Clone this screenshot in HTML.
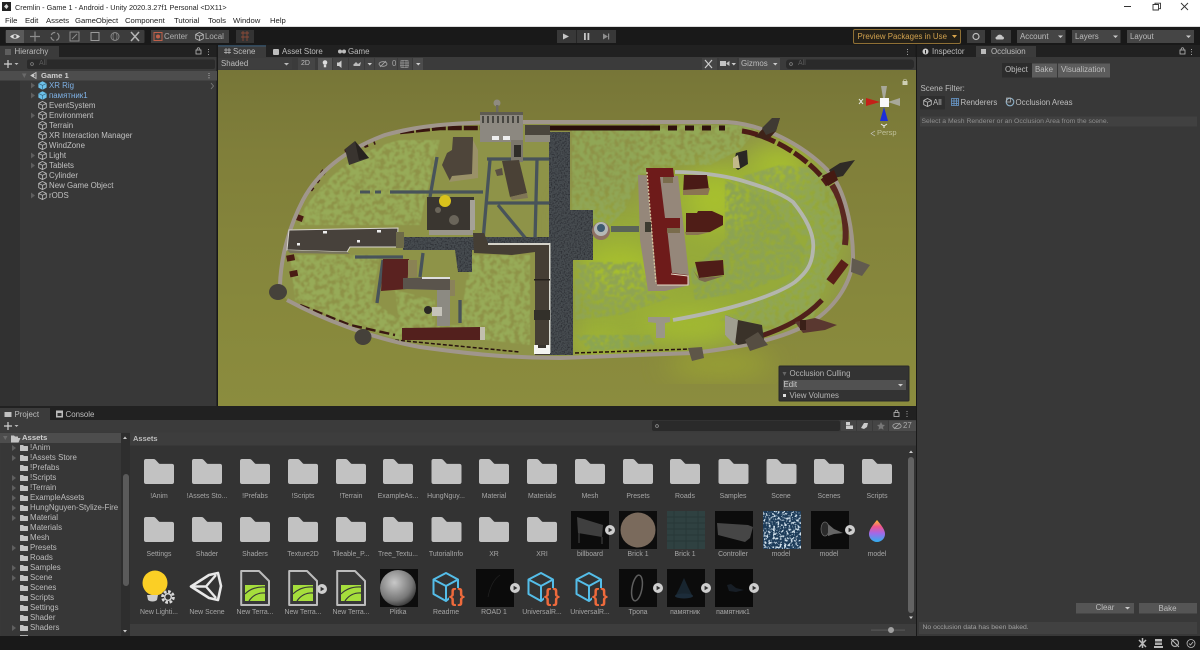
<!DOCTYPE html>
<html lang="en"><head><meta charset="utf-8"><title>Cremlin - Unity</title>
<style>
html,body{margin:0;padding:0;width:1200px;height:650px;overflow:hidden;background:#383838}
body{position:relative;font-family:"Liberation Sans","Noto Sans CJK SC",sans-serif}
svg.g{position:absolute;left:0;top:0}
span{position:absolute;white-space:nowrap;line-height:10px;font-size:7.9px;color:#bdbdbd}
.c{transform:translateX(-50%)}
.w{color:#222;font-size:7.7px}
.l{font-size:6.9px;color:#a6a6a6}
.h{color:#c0c0c0}
.b{color:#7fb2e6}
</style></head><body>
<svg class="g" width="1200" height="650" viewBox="0 0 1200 650" xmlns="http://www.w3.org/2000/svg">
<defs>
<filter id="tree" x="-5%" y="-5%" width="110%" height="110%" color-interpolation-filters="sRGB"><feTurbulence type="fractalNoise" baseFrequency=".2" numOctaves="2" seed="4" result="n"/><feColorMatrix in="n" type="matrix" values="0 0 0 0 0 0 0 0 0 0 0 0 0 0 0 4 0 0 0 -1.3" result="a"/><feComposite in="SourceGraphic" in2="a" operator="in"/><feGaussianBlur stdDeviation=".6"/></filter>
<filter id="cob" x="0" y="0" width="100%" height="100%" color-interpolation-filters="sRGB"><feTurbulence type="fractalNoise" baseFrequency=".7" numOctaves="1" seed="9" result="n"/><feColorMatrix in="n" type="matrix" values="0 0 0 0 .17 0 0 0 0 .18 0 0 0 0 .2 3 0 0 0 -1.3" result="a"/><feComposite in="a" in2="SourceGraphic" operator="in" result="b"/><feMerge><feMergeNode in="SourceGraphic"/><feMergeNode in="b"/></feMerge></filter>
<filter id="bl" x="-60%" y="-60%" width="220%" height="220%" color-interpolation-filters="sRGB"><feGaussianBlur stdDeviation="14"/></filter>
<filter id="bs" color-interpolation-filters="sRGB"><feGaussianBlur stdDeviation=".35"/></filter>
<filter id="gr" x="0" y="0" width="100%" height="100%" color-interpolation-filters="sRGB"><feTurbulence type="fractalNoise" baseFrequency=".45" numOctaves="2" seed="3" result="n"/><feColorMatrix in="n" type="matrix" values="0 0 0 0 .82 0 0 0 0 .88 0 0 0 0 .92 6 0 0 0 -3" result="a"/><feComposite in="a" in2="SourceGraphic" operator="in" result="b"/><feMerge><feMergeNode in="SourceGraphic"/><feMergeNode in="b"/></feMerge></filter>
<radialGradient id="sph" cx=".4" cy=".35" r=".7"><stop offset="0" stop-color="#c8c8c8"/><stop offset=".7" stop-color="#777"/><stop offset="1" stop-color="#333"/></radialGradient>
<linearGradient id="drop" x1="0" y1="0" x2="0" y2="1"><stop offset="0" stop-color="#ffc02e"/><stop offset=".3" stop-color="#f0568c"/><stop offset=".6" stop-color="#a368e8"/><stop offset="1" stop-color="#2eb0ee"/></linearGradient>
<linearGradient id="sky" x1="0" y1="0" x2="0" y2="1"><stop offset="0" stop-color="#777638"/><stop offset=".25" stop-color="#807f3a"/><stop offset=".7" stop-color="#87883c"/><stop offset="1" stop-color="#8b8c3e"/></linearGradient>
<symbol id="folder" viewBox="0 0 30 25" overflow="visible"><path d="M2,0h7.5c1,0 1.6,.4 2.2,1l3,3.2c.5,.5 1,.7 1.8,.7H28c1.2,0 2,.8 2,2V23c0,1.2-.8,2-2,2H2c-1.2,0-2-.8-2-2V2C0,.8 .8,0 2,0Z" fill="#c2c2c2"/></symbol>
<symbol id="mf" viewBox="0 0 8 6" overflow="visible"><path d="M0,.6C0,.2 .2,0 .6,0H3L4,1H7.4C7.8,1 8,1.2 8,1.6V5.4C8,5.8 7.8,6 7.4,6H.6C.2,6 0,5.8 0,5.4Z" fill="#c4c4c4"/></symbol>
<symbol id="cube" viewBox="0 0 9 9" overflow="visible"><path d="M4.5,.5L8.3,2.4V6.6L4.5,8.5 .7,6.6V2.4ZM.7,2.4L4.5,4.3 8.3,2.4M4.5,4.3V8.5" fill="none" stroke="#bdbdbd" stroke-width=".8"/></symbol>
<symbol id="bcube" viewBox="0 0 9 9" overflow="visible"><path d="M4.5,.3L8.6,2.4V6.6L4.5,8.7 .4,6.6V2.4Z" fill="#6cc0e8"/><path d="M.4,2.4L4.5,4.4 8.6,2.4M4.5,4.4V8.7" fill="none" stroke="#2f5a74" stroke-width=".6"/></symbol>
<symbol id="tri" viewBox="0 0 4 6" overflow="visible"><path d="M0,0L4,3 0,6Z" fill="#5f5f5f"/></symbol>
<symbol id="play" viewBox="0 0 10 10" overflow="visible"><circle cx="5" cy="5" r="5" fill="#cfcfcf"/><path d="M3.6,2.7L7.4,5 3.6,7.3Z" fill="#333"/></symbol>
<symbol id="terr" viewBox="0 0 30 36" overflow="visible"><path d="M1.2,1H19L29,11V35H1.2Z" fill="#383838" stroke="#bcbcbc" stroke-width="2" stroke-linejoin="round"/><path d="M5,15H25V31H5Z" fill="#a6de3c"/><path d="M5,24C10,19 17,16.500 25,17M9,31C13,25 19,22.500 25,23" fill="none" stroke="#383838" stroke-width="1.200"/></symbol>
<symbol id="rm" viewBox="0 0 36 36" overflow="visible"><path d="M15,2L27,8.5V20L15,30 2.5,23V8.5ZM2.5,8.5L15,15 27,8.5M15,15V30" fill="none" stroke="#54bde8" stroke-width="2" stroke-linejoin="round"/><rect x="18" y="17" width="18" height="19" fill="#333"/></symbol>
</defs>

<!-- chrome -->
<rect width="1200" height="650" fill="#383838"/>
<rect width="1200" height="27" fill="#fff"/>
<rect y="26.5" width="1200" height=".8" fill="#b8b8b8"/>
<rect y="27" width="1200" height="18" fill="#191919"/>
<rect y="45" width="1200" height="12" fill="#212121"/>
<rect y="57" width="217" height="14" fill="#3b3b3b"/>
<rect y="636" width="1200" height="14" fill="#191919"/>
<rect x="0" y="71" width="20" height="335" fill="#313131"/>
<rect x="216.5" y="45" width="1.5" height="362" fill="#191919"/>
<rect x="915.5" y="45" width="1.5" height="591" fill="#191919"/>
<!-- title icon -->
<rect x="2" y="2" width="9" height="9" fill="#222"/><path d="M4,6.5L6.5,4 8.5,6.5 6.5,9Z" fill="#ddd"/>
<!-- window buttons -->
<path d="M1124,6.5h7" stroke="#333" stroke-width="1"/>
<path d="M1153,4.5h5.5v5.5h-5.5ZM1155,4.5v-1.3h5.5v5.5h-2" fill="none" stroke="#333" stroke-width=".9"/>
<path d="M1181,3l7,7M1188,3l-7,7" stroke="#333" stroke-width=".9"/>
<!-- toolbar tool group -->
<rect x="5.500" y="30" width="139" height="13" fill="#3c3c3c" rx="1"/>
<rect x="6" y="30" width="18" height="13" fill="#5a5a5a"/>
<path d="M10,36.500Q15,32 20,36.500Q15,41 10,36.500Z" fill="#ddd"/><circle cx="15" cy="36.500" r="1.500" fill="#5a5a5a"/>
<path d="M35,31.500V41.500M30,36.500H40" stroke="#8d8d8d" stroke-width="1.200"/>
<circle cx="55" cy="36.500" r="4" fill="none" stroke="#8d8d8d" stroke-width="1.200" stroke-dasharray="5 2"/>
<rect x="70" y="32" width="9" height="9" fill="none" stroke="#8d8d8d"/><path d="M72,39L77,34" stroke="#8d8d8d"/>
<rect x="91" y="32.500" width="8" height="8" fill="none" stroke="#9a9a9a"/>
<circle cx="115" cy="36.500" r="4" fill="none" stroke="#858585"/><ellipse cx="115" cy="36.500" rx="2" ry="4" fill="none" stroke="#858585" stroke-width=".7"/>
<path d="M131,32l8,9M139,32l-8,9" stroke="#b5b5b5" stroke-width="1.500"/>
<rect x="151" y="30" width="78" height="13" fill="#3f3f3f"/>
<rect x="154" y="32.500" width="8" height="8" fill="none" stroke="#c0604a"/><circle cx="158" cy="36.500" r="2" fill="#c0604a"/>
<use href="#cube" x="195" y="32" width="9" height="9"/>
<rect x="236" y="30" width="18" height="13" fill="#333"/><path d="M241,33h8M241,37h8M243,31v10M247,31v10" stroke="#8a4a38" stroke-width=".9"/>
<!-- play -->
<rect x="557" y="30" width="59" height="13" fill="#383838"/><rect x="576" y="30" width="1" height="13" fill="#262626"/>
<path d="M563,33.500L569,36.500 563,39.500Z" fill="#c6c6c6"/>
<rect x="584" y="33" width="1.800" height="7" fill="#c6c6c6"/><rect x="587.500" y="33" width="1.800" height="7" fill="#c6c6c6"/>
<path d="M603,33.500L608,36.500 603,39.500Z" fill="#8e8e8e"/><rect x="608" y="33.500" width="1.200" height="6" fill="#8e8e8e"/>
<!-- right toolbar -->
<rect x="853.500" y="29.500" width="107" height="14" rx="1.500" fill="#242018" stroke="#8f7035"/>
<path d="M952,35h5l-2.500,3Z" fill="#d9a54c"/>
<rect x="967" y="30" width="18" height="13" fill="#3c3c3c"/><circle cx="976" cy="36.500" r="3" fill="none" stroke="#bdbdbd" stroke-width="1.200"/>
<rect x="991" y="30" width="20" height="13" fill="#3c3c3c"/><path d="M997,39.500c-2,0-2-3 0-3 .5-2.500 5-2.500 5.500 0 2,0 2,3 0,3Z" fill="#c6c6c6"/>
<rect x="1017" y="30" width="48.500" height="13" fill="#454545"/><path d="M1058,35.500h5l-2.500,2.500Z" fill="#ccc"/>
<rect x="1072" y="30" width="48.500" height="13" fill="#454545"/><path d="M1113,35.500h5l-2.500,2.500Z" fill="#ccc"/>
<rect x="1127" y="30" width="67" height="13" fill="#454545"/><path d="M1186,35.500h5l-2.500,2.500Z" fill="#ccc"/>

<!-- Hierarchy tab -->
<rect x="0" y="46" width="59" height="11" fill="#3b3b3b"/>
<path d="M5,50h6M5,52h6M5,54h6" stroke="#9a9a9a" stroke-width=".7"/>
<rect x="196" y="50" width="5" height="4" fill="none" stroke="#bbb" stroke-width=".8"/><path d="M197,50c0-3 3-3 3,0" fill="none" stroke="#bbb" stroke-width=".7"/>
<path d="M208.500,49v.8M208.500,51.500v.8M208.500,54v.8" stroke="#ccc" stroke-width="1"/>
<path d="M4,64h8M8,60v8" stroke="#d0d0d0" stroke-width="1.200"/><path d="M14.500,63h4l-2,2Z" fill="#bbb"/>
<rect x="27" y="59.500" width="188" height="9.500" rx="2" fill="#2a2a2a"/>
<circle cx="32" cy="64" r="1.400" fill="none" stroke="#888" stroke-width=".7"/>
<!-- Hierarchy content -->
<rect x="20" y="71" width="197" height="9.500" fill="#4d4d4d"/><rect y="71" width="20" height="9.500" fill="#4d4d4d"/>
<path d="M22,73.500l4.500,0-2.200,4.500Z" fill="#6a6a6a"/>
<path d="M31,75.500L36,72.500V78.500Z" fill="none" stroke="#c8c8c8" stroke-width=".9"/><circle cx="33" cy="75.500" r="1.500" fill="#c8c8c8"/>
<path d="M209,73v.8M209,75.200v.8M209,77.400v.8" stroke="#ccc" stroke-width="1"/>
<use href="#bcube" x="38" y="81" width="9" height="9"/>
<use href="#bcube" x="38" y="91" width="9" height="9"/>
<use href="#tri" x="31" y="82.500" width="4" height="6"/>
<use href="#tri" x="31" y="92.500" width="4" height="6"/>
<use href="#tri" x="31" y="112.500" width="4" height="6"/>
<use href="#tri" x="31" y="152.500" width="4" height="6"/>
<use href="#tri" x="31" y="162.500" width="4" height="6"/>
<use href="#tri" x="31" y="192.500" width="4" height="6"/>
<path d="M211,83l2.500,3-2.500,3" fill="none" stroke="#777" stroke-width=".9"/>
<use href="#cube" x="38" y="101" width="9" height="9"/>
<use href="#cube" x="38" y="111" width="9" height="9"/>
<use href="#cube" x="38" y="121" width="9" height="9"/>
<use href="#cube" x="38" y="131" width="9" height="9"/>
<use href="#cube" x="38" y="141" width="9" height="9"/>
<use href="#cube" x="38" y="151" width="9" height="9"/>
<use href="#cube" x="38" y="161" width="9" height="9"/>
<use href="#cube" x="38" y="171" width="9" height="9"/>
<use href="#cube" x="38" y="181" width="9" height="9"/>
<use href="#cube" x="38" y="191" width="9" height="9"/>

<!-- Scene tabs -->
<rect x="218" y="45.500" width="48" height="11.500" fill="#3b3b3b"/><rect x="218" y="45.500" width="48" height=".8" fill="#3f6f95"/>
<path d="M226,48v6M229,48v6M224,50h7M224,52.500h7" stroke="#bbb" stroke-width=".7"/>
<rect x="273" y="49" width="6" height="6" rx="1" fill="#bdbdbd"/>
<rect x="338" y="49.500" width="4" height="4" rx="2" fill="#bdbdbd"/><rect x="342" y="49.500" width="4" height="4" rx="2" fill="#bdbdbd"/>
<path d="M907.500,49v.8M907.500,51.500v.8M907.500,54v.8" stroke="#ccc" stroke-width="1"/>
<rect x="218" y="57" width="698" height="13" fill="#3b3b3b"/>
<rect x="218" y="58" width="74" height="11.500" fill="#3e3e3e"/><path d="M284,63h5l-2.500,2.500Z" fill="#bbb"/>
<rect x="298" y="58" width="17" height="12" fill="#454545"/>
<rect x="318" y="58" width="14" height="12" fill="#555"/><circle cx="325" cy="62.500" r="2.300" fill="#ddd"/><rect x="323.800" y="64.800" width="2.400" height="2.500" fill="#ddd"/>
<rect x="333" y="58" width="15" height="12" fill="#454545"/><path d="M337,62.500h2l2.500-2v7.500l-2.500-2h-2Z" fill="#ccc"/>
<rect x="349" y="58" width="15" height="12" fill="#454545"/><path d="M353,65l3-3 2,2 3-2-1,4h-6Z" fill="#bbb"/>
<rect x="365" y="58" width="9" height="12" fill="#454545"/><path d="M367.500,63h4.500l-2.200,2.500Z" fill="#ccc"/>
<rect x="375" y="58" width="22" height="12" fill="#454545"/><ellipse cx="383" cy="64" rx="4" ry="2.300" fill="none" stroke="#aaa" stroke-width=".8"/><path d="M380,67l6-6" stroke="#aaa" stroke-width=".8"/>
<rect x="398" y="58" width="14" height="12" fill="#454545"/><path d="M401,60.500h7v7h-7ZM403,60v8M406,60v8M400,63h9M400,65.500h9" fill="none" stroke="#aaa" stroke-width=".6"/>
<rect x="413" y="58" width="10" height="12" fill="#4c4c4c"/><path d="M416,63h4.500l-2.200,2.500Z" fill="#ccc"/>
<rect x="702" y="58" width="15" height="12" fill="#454545"/><path d="M705,60l7,8M712,60l-7,8" stroke="#ccc" stroke-width="1.200"/>
<rect x="719" y="58" width="18" height="12" fill="#3f3f3f"/><rect x="720" y="61" width="6" height="5" fill="#c2c2c2"/><path d="M726.500,63l3-2v5l-3-2Z" fill="#c2c2c2"/><path d="M731.500,63h4.500l-2.200,2.500Z" fill="#ccc"/>
<rect x="739" y="58" width="41" height="12" fill="#4f4f4f"/><path d="M773,63h4.500l-2.200,2.500Z" fill="#ccc"/>
<rect x="786" y="59.500" width="128" height="9.500" rx="3" fill="#2a2a2a"/><circle cx="791" cy="64" r="1.400" fill="none" stroke="#888" stroke-width=".7"/>

<!-- SCENE -->
<svg x="218" y="70" width="698" height="336" viewBox="218 70 698 336" overflow="hidden">
<rect x="218" y="70" width="698" height="336" fill="url(#sky)"/>
<ellipse cx="720" cy="364" rx="55" ry="9" fill="#a5b42c" opacity=".85" filter="url(#bl)"/>
<!-- ground -->
<path d="M280,285C281,255 290,225 303,200C318,172 345,150 385,135C420,125 455,123 500,122L727,122C770,125 810,150 832,175C848,198 853,235 853,258C852,280 838,305 812,322C785,338 745,347 693,353L560,358C510,358 470,354 420,347C370,338 320,318 287,300C282,295 280,290 280,285Z" fill="#8e9348"/>
<clipPath id="gc"><path d="M280,285C281,255 290,225 303,200C318,172 345,150 385,135C420,125 455,123 500,122L727,122C770,125 810,150 832,175C848,198 853,235 853,258C852,280 838,305 812,322C785,338 745,347 693,353L560,358C510,358 470,354 420,347C370,338 320,318 287,300C282,295 280,290 280,285Z"/></clipPath>
<g clip-path="url(#gc)">
<!-- lime ground on the east half -->
<path d="M572,205H640V170H700L760,150 830,180 850,240 820,315 700,350 572,355Z" fill="#96aa3a" filter="url(#bl)"/>
<g filter="url(#bl)" fill="#a8c02e">
<ellipse cx="780" cy="165" rx="30" ry="20"/>
<ellipse cx="620" cy="270" rx="40" ry="25"/>
<ellipse cx="690" cy="325" rx="50" ry="12"/>
<ellipse cx="715" cy="200" rx="30" ry="30"/>
<ellipse cx="600" cy="345" rx="30" ry="10"/>
</g>
<!-- trees -->
<g fill="#97ab58" filter="url(#tree)">
<path d="M300,215C330,170 360,150 400,140L440,140 425,200 420,225H300Z"/>
<path d="M290,255H380L372,300 410,328 400,340 350,325 295,300Z"/>
<path d="M395,290L435,300 435,325 460,325 470,255 485,255 530,255 530,345 400,330Z"/>
<path d="M572,128H640L640,175 625,210 610,225 572,210Z" fill="#90a656"/>
<path d="M640,125H760L740,150 710,165 680,165 640,175Z" fill="#93a956"/>
<path d="M575,262H640L650,290 670,298 620,315 575,320Z" fill="#8fa452"/>
<path d="M730,180L780,165 830,170 848,230 812,320 760,335 720,320 790,280 808,240Z" fill="#90a654"/>
<path d="M725,180L770,200 805,250 800,270 745,292 695,300 690,270 725,240Z" fill="#8ca352"/>
<path d="M575,335H650L655,345 590,352Z" fill="#8ba552"/>
</g>
</g>
<!-- dark red inner wall -->
<g fill="none" stroke-linejoin="round">
<path d="M400,132L440,128 480,128" stroke="#38140f" stroke-width="4.500" stroke-dasharray="14 2"/>
<path d="M550,128H660" stroke="#2a0e0a" stroke-width="5"/>
<path d="M668,128H725" stroke="#2f110d" stroke-width="5" stroke-dasharray="9 8"/>
<path d="M742,131C770,135 810,158 828,185" stroke="#4d1c16" stroke-width="5" stroke-dasharray="16 3"/>
<path d="M832,185C845,205 847,230 845,245" stroke="#5a2820" stroke-width="6"/>
<path d="M845,262L830,282" stroke="#5a1f18" stroke-width="9"/>
<path d="M822,300C805,318 785,328 758,337" stroke="#50201a" stroke-width="5"/>
<path d="M310,190L325,170M345,152L375,142" stroke="#3a1812" stroke-width="5" stroke-dasharray="4 6"/>
<path d="M300,215L293,235M290,255L295,280" stroke="#4a1c14" stroke-width="8" stroke-dasharray="6 10"/>
<path d="M300,305L350,325 395,335" stroke="#3a1812" stroke-width="2.500" stroke-dasharray="10 4"/>
<path d="M395,340L520,352M575,353L690,349" stroke="#28120e" stroke-width="1.500" stroke-dasharray="4 2"/>
</g>
<!-- wall -->
<path d="M280,285C281,255 290,225 303,200C318,172 345,150 385,135C420,125 455,123 500,122L727,122C770,125 810,150 832,175C848,198 853,235 853,258C852,280 838,305 812,322C785,338 745,347 693,353L560,358C510,358 470,354 420,347C370,338 320,318 287,300" fill="none" stroke="#a0968c" stroke-width="4"/>
<!-- roads -->
<g fill="none" stroke="#48535a" stroke-width="3.300">
<path d="M437,157L430,197M390,192H483M490,160L483,240M487,159H550M487,203H550M537,160L535,240M498,205L527,240M355,257H403M383,260L377,303M423,253L420,277M460,300V323"/>
<path d="M360,192h10M375,192h6" stroke-width="3"/>
</g>
<!-- cobble -->
<g fill="#474c50" filter="url(#cob)">
<path d="M549,132H570V210H593V260H573V355H548V250H403V237H549Z"/>
<path d="M455,250H472V272H458Z"/>
</g>
<!-- building top -->
<g filter="url(#bs)">
<circle cx="497" cy="103" r="3.500" fill="#8f8b80"/><rect x="496" y="105" width="2.500" height="7" fill="#6d6a60"/>
<rect x="480" y="112" width="43" height="30" fill="#8c8880"/>
<rect x="480" y="112" width="43" height="3" fill="#5e5b52"/>
<path d="M483,116v7M488,116v7M493,116v7M498,116v7M503,116v7M508,116v7M513,116v7M518,116v7" stroke="#3b3a36" stroke-width="1.700"/>
<rect x="492" y="136" width="7" height="4" fill="#eee"/><rect x="503" y="136" width="7" height="4" fill="#eee"/>
<rect x="511" y="140" width="12" height="22" fill="#7b776c"/><rect x="514" y="145" width="7" height="12" fill="#2f2d28"/>
<rect x="525" y="125" width="25" height="10" fill="#4a453c"/><rect x="525" y="135" width="25" height="7" fill="#8e8a7e"/>
<!-- house 1 -->
<path d="M453,137H473V172L476,178 450,181 442,165 447,153 452,150Z" fill="#4e453a"/>
<path d="M473,140L478,150 478,178 449,182 452,176 472,174Z" fill="#9a9168"/>
<!-- house 2 -->
<path d="M502,161L519,160 527,193 510,197Z" fill="#4a4136"/><path d="M495,170L502,168 503,175 497,176Z" fill="#5a5043"/><path d="M510,197L527,193 528,198 512,200Z" fill="#7f7556"/>
<!-- cathedral -->
<rect x="427" y="197" width="47" height="33" fill="#3a3630"/>
<rect x="429" y="230" width="44" height="5" fill="#9a968a"/>
<rect x="470" y="200" width="5" height="30" fill="#a5a298"/>
<circle cx="445" cy="201" r="6" fill="#d9c21c"/>
<circle cx="454" cy="220" r="5" fill="#6a655a"/><circle cx="438" cy="210" r="3" fill="#6a655a"/>
<!-- long building left -->
<path d="M289,230L398,228 397,247 350,247 347,252 287,250Z" fill="#47413b" stroke="#d8d6cd" stroke-width="1"/>
<path d="M287,250L347,252 350,254 290,253Z" fill="#77735c"/>
<rect x="396" y="232" width="8" height="16" fill="#6d6a48"/>
<rect x="323" y="231" width="4" height="2.500" fill="#eee"/><rect x="377" y="230" width="4" height="2.500" fill="#eee"/><rect x="297" y="243" width="3" height="2.500" fill="#eee"/><rect x="357" y="240" width="3" height="2.500" fill="#eee"/>
<!-- central L -->
<path d="M473,233H484L488,243H550V355H535V252L512,255 474,253Z" fill="#453e34"/>
<path d="M488,243H550V245H488Z" fill="#d4d2c8"/><rect x="549" y="243" width="1.500" height="110" fill="#dadad0"/>
<rect x="534" y="279" width="16" height="1.500" fill="#26221d"/><rect x="534" y="310" width="16" height="10" fill="#33302a"/>
<rect x="534" y="345" width="16" height="9" fill="#f4f4f0"/>
<rect x="538" y="345" width="8" height="3" fill="#3a362f"/>
<!-- red building -->
<path d="M383,259H409L407,289 381,291Z" fill="#5a2220"/>
<rect x="408" y="260" width="9" height="17" fill="#8a8254"/>
<!-- gray L -->
<path d="M403,278L450,277 450,302 437,302 437,290 403,289Z" fill="#5a544c"/>
<path d="M422,277H450V279H422Z" fill="#ddd"/>
<rect x="450" y="280" width="5" height="16" fill="#8a825a"/>
<path d="M437,290H450V326H437Z" fill="#8c8a82"/>
<circle cx="428" cy="310" r="4" fill="#2a2824"/><rect x="432" y="307" width="10" height="9" fill="#c5c3ba"/>
<!-- bottom red -->
<path d="M402,328L480,327 480,340 402,340Z" fill="#53201d"/><rect x="480" y="327" width="5" height="13" fill="#c2bfae"/>
<!-- white roads -->
<path d="M675,172C700,172 725,176 740,180C760,186 780,192 793,202C806,218 815,235 813,250C812,265 806,273 795,282C775,296 730,310 673,320" fill="none" stroke="#b4b6ae" stroke-width="3.800"/>
<path d="M648,317h22v5l-5,1v15h-9v-15l-8,-1Z" fill="#9a9688"/>
<!-- red E courtyard -->
<path d="M638,175L678,176 690,285 665,291 648,291 640,240Z" fill="#95877a"/>
<path d="M646,168L673,168 674,177 660,177 665,218 680,218 680,228 667,228 672,273 688,275 688,285 657,285Z" fill="#6e1b1a"/>
<path d="M647,172L656,284" stroke="#d8c8a0" stroke-width="1.300" stroke-dasharray="2 1.500"/>
<path d="M671,274L688,276V285L657,285" fill="none" stroke="#e6dcc8" stroke-width="1"/>
<path d="M663,177H673V183H663Z" fill="#7a6c4c"/><path d="M667,228H680V233H667Z" fill="#7a6c4c"/>
<!-- small red -->
<path d="M684,175H707L709,190 683,194Z" fill="#4a1a16"/><path d="M683,190L710,188 708,195 683,195Z" fill="#8a7452"/>
<path d="M686,213H697L698,211H712L723,216 723,225 710,232 686,234Z" fill="#4f1d17"/><path d="M685,232L710,232 698,235 686,235Z" fill="#8a7452"/>
<path d="M695,262L723,260 724,275 699,278Z" fill="#4f1c17"/><path d="M693,270L699,278 724,276 705,282 699,280Z" fill="#7c6a4e"/>
<!-- little house -->
<path d="M736,153L747,150 748,164 738,170 733,166Z" fill="#2a2824"/><path d="M733,158L738,155 740,168 733,168Z" fill="#c2b989"/>
<!-- bottom right house -->
<path d="M725,315L738,320 762,325 764,340 738,345 725,335Z" fill="#3a3229"/><path d="M725,315L738,320 735,345 725,335Z" fill="#a09e90"/>
<!-- fountain -->
<circle cx="601" cy="231" r="9" fill="#8e7063"/><circle cx="601" cy="229" r="7" fill="#b4b8b6"/><circle cx="601" cy="228" r="4" fill="#3e5a70"/>
<rect x="611" y="226" width="28" height="6" fill="#5a6458"/>
<rect x="645" y="222" width="6" height="10" fill="#3c3a30"/>
<!-- towers -->
<path d="M345,149L355,141 369,158 349,165Z" fill="#39342f"/><path d="M355,141L369,158 359,160Z" fill="#27231f"/>
<path d="M755,137L770,121 780,118 776,131 768,140Z" fill="#3e2318"/><path d="M762,128L772,118 780,118 776,131 766,135Z" fill="#3f3a33"/>
<path d="M829,170L840,163 855,160 843,176 834,178Z" fill="#2f2b26"/><path d="M822,176L834,170 838,180 828,186Z" fill="#451a12"/>
<path d="M852,258L870,265 862,276 851,272Z" fill="#615a4f"/>
<path d="M795,322L815,318 837,325 825,330 803,333Z" fill="#5a3830"/><rect x="800" y="320" width="6" height="10" fill="#3a2018"/>
<path d="M745,340L758,332 768,345 750,351Z" fill="#564e42"/>
<path d="M688,348L702,347 704,358 692,361Z" fill="#5e5648"/>
<ellipse cx="278" cy="292" rx="9" ry="8" fill="#45413a"/>
<ellipse cx="363" cy="337" rx="8.500" ry="8" fill="#45413a"/>
</g>
<!-- gizmo -->
<path d="M866,98L880,102 866,106Z" fill="#c42018"/><path d="M900,98L888,102 900,106Z" fill="#a8a89a"/>
<path d="M881,86H887L885,98H883Z" fill="#a8a89a"/><path d="M884,107L888,121H880Z" fill="#1c2fd8"/>
<rect x="880" y="98" width="9" height="9" fill="#f8f8f8"/>
<path d="M859,99l4,5M863,99l-4,5" stroke="#eee" stroke-width="1"/>
<path d="M881,124l3,2 3-2M884,126v2" stroke="#eee" stroke-width="1" fill="none"/>
<path d="M875,131l-4,2.500 4,2.500" fill="none" stroke="#ccc" stroke-width=".6"/>
<rect x="902.500" y="81" width="5" height="4" fill="#cfcfb5"/><path d="M903.500,81c0-2.500 3-2.500 3,0" fill="none" stroke="#cfcfb5" stroke-width=".6"/>
<!-- overlay -->
<rect x="779" y="366" width="130" height="35" rx="1" fill="#333" stroke="#2a2a2a"/>
<rect x="783" y="380" width="123" height="10" fill="#515151"/>
<path d="M782.500,372h4l-2,4Z" fill="#666"/>
<path d="M898,384h5l-2.500,2.500Z" fill="#ccc"/>
<rect x="783" y="394" width="3" height="3" fill="#ddd"/>
</svg>

<!-- Inspector -->
<rect x="976" y="46" width="60" height="11" fill="#3b3b3b"/>
<circle cx="925.500" cy="51.500" r="3" fill="#ccc"/><rect x="925" y="50" width="1" height="3.500" fill="#222"/>
<rect x="981" y="49" width="5" height="5" fill="#bbb"/>
<rect x="1180" y="50" width="5" height="4" fill="none" stroke="#bbb" stroke-width=".8"/><path d="M1181,50c0-3 3-3 3,0" fill="none" stroke="#bbb" stroke-width=".7"/>
<path d="M1191.500,49v.8M1191.500,51.500v.8M1191.500,54v.8" stroke="#ccc" stroke-width="1"/>
<rect x="1002" y="63" width="30" height="14.500" fill="#2c2c2c"/>
<rect x="1032" y="63.500" width="25" height="14" fill="#5c5c5c"/>
<rect x="1058" y="63.500" width="52" height="14" fill="#5c5c5c"/>
<rect x="920" y="96" width="25" height="13.500" rx="1" fill="#2e2e2e"/>
<use href="#cube" x="923" y="98" width="9" height="9"/>
<path d="M951.500,98.500h7v7h-7ZM954,98.500v7M956.500,98.500v7M951.500,101h7M951.500,103.500h7" fill="none" stroke="#6a9cd0" stroke-width=".8"/>
<circle cx="1010" cy="102" r="3.800" fill="none" stroke="#8cb0c8" stroke-width="1.100"/><rect x="1006.500" y="98" width="4" height="4" fill="none" stroke="#bbb" stroke-width=".7"/>
<rect x="920" y="116.500" width="277" height="10" fill="#414141"/>
<rect x="1076" y="603" width="58" height="10.500" fill="#555"/><path d="M1125,607h5l-2.500,2.500Z" fill="#ccc"/>
<rect x="1139" y="603" width="58" height="10.500" fill="#555"/>
<rect x="919" y="622" width="278" height="12" fill="#414141"/>

<!-- Project -->
<rect y="406" width="916" height="14" fill="#212121"/>
<rect y="408" width="50" height="12" fill="#3b3b3b"/>
<rect x="4.500" y="412" width="7" height="5" fill="#c2c2c2"/>
<rect x="56" y="410.500" width="7" height="7" fill="#bbb"/><rect x="57.500" y="413" width="4" height="3" fill="#333"/>
<rect x="0" y="420" width="916" height="12.500" fill="#3b3b3b"/>
<path d="M4,426h8M8,422v8" stroke="#d0d0d0" stroke-width="1.200"/><path d="M14.500,425h4l-2,2Z" fill="#bbb"/>
<rect x="894" y="412.500" width="5" height="4" fill="none" stroke="#bbb" stroke-width=".8"/><path d="M895,412.500c0-3 3-3 3,0" fill="none" stroke="#bbb" stroke-width=".7"/>
<path d="M907,411v.8M907,413.500v.8M907,416v.8" stroke="#ccc" stroke-width="1"/>
<rect x="652" y="420.500" width="188" height="10.500" rx="2" fill="#2a2a2a"/>
<circle cx="657" cy="426" r="1.400" fill="none" stroke="#999" stroke-width=".7"/>
<rect x="841" y="420.500" width="15" height="10.500" fill="#454545"/><rect x="846" y="422" width="4" height="3" fill="#ccc"/><rect x="846" y="425.500" width="7" height="3.500" fill="#ccc"/>
<rect x="857" y="420.500" width="15" height="10.500" fill="#454545"/><path d="M861,428l3-5h4l-1,4-3,2Z" fill="#ccc"/>
<rect x="873" y="420.500" width="15" height="10.500" fill="#454545"/><path d="M881,422l1.300,2.600 2.700.4-2,1.900.5,2.800-2.500-1.300-2.500,1.300.5-2.800-2-1.900 2.700-.4Z" fill="#777"/>
<rect x="889" y="420.500" width="27" height="10.500" fill="#4c4c4c"/><ellipse cx="897" cy="426" rx="4.200" ry="2.500" fill="none" stroke="#aaa" stroke-width=".8"/><path d="M894,429l6-6" stroke="#aaa" stroke-width=".8"/>
<rect x="1" y="433" width="122" height="203" fill="#373737"/>
<rect x="0" y="433" width="121" height="10" fill="#4d4d4d"/>
<path d="M3,436h4.500l-2.200,4Z" fill="#6a6a6a"/>
<path d="M11,442.500V435.500h3l1,1h3v1.500h2.500l-2,4.500Z" fill="#c4c4c4"/>
<rect x="121" y="433" width="9" height="203" fill="#2e2e2e"/>
<path d="M123,439l2-2.500 2,2.500Z" fill="#c8c8c8"/><path d="M123,630l2,2.500 2-2.500Z" fill="#c8c8c8"/>
<rect x="123" y="474" width="6" height="112" rx="3" fill="#5a5a5a"/>
<g>
<use href="#mf" x="20" y="445" width="8" height="6"/><use href="#tri" x="12" y="445" width="4" height="6"/>
<use href="#mf" x="20" y="455" width="8" height="6"/><use href="#tri" x="12" y="455" width="4" height="6"/>
<use href="#mf" x="20" y="465" width="8" height="6"/>
<use href="#mf" x="20" y="475" width="8" height="6"/><use href="#tri" x="12" y="475" width="4" height="6"/>
<use href="#mf" x="20" y="485" width="8" height="6"/><use href="#tri" x="12" y="485" width="4" height="6"/>
<use href="#mf" x="20" y="495" width="8" height="6"/><use href="#tri" x="12" y="495" width="4" height="6"/>
<use href="#mf" x="20" y="505" width="8" height="6"/><use href="#tri" x="12" y="505" width="4" height="6"/>
<use href="#mf" x="20" y="515" width="8" height="6"/><use href="#tri" x="12" y="515" width="4" height="6"/>
<use href="#mf" x="20" y="525" width="8" height="6"/>
<use href="#mf" x="20" y="535" width="8" height="6"/>
<use href="#mf" x="20" y="545" width="8" height="6"/><use href="#tri" x="12" y="545" width="4" height="6"/>
<use href="#mf" x="20" y="555" width="8" height="6"/>
<use href="#mf" x="20" y="565" width="8" height="6"/><use href="#tri" x="12" y="565" width="4" height="6"/>
<use href="#mf" x="20" y="575" width="8" height="6"/><use href="#tri" x="12" y="575" width="4" height="6"/>
<use href="#mf" x="20" y="585" width="8" height="6"/>
<use href="#mf" x="20" y="595" width="8" height="6"/>
<use href="#mf" x="20" y="605" width="8" height="6"/>
<use href="#mf" x="20" y="615" width="8" height="6"/>
<use href="#mf" x="20" y="625" width="8" height="6"/><use href="#tri" x="12" y="625" width="4" height="6"/>
</g>
<rect x="20" y="635" width="8" height="1" fill="#aaa"/>
<rect x="130" y="432.500" width="786" height="13" fill="#3d3d3d"/>
<rect x="130" y="445.500" width="786" height="178.500" fill="#333"/>
<rect x="130" y="624" width="786" height="12" fill="#3d3d3d"/>
<path d="M909,453l2-2.500 2,2.500Z" fill="#ccc"/><path d="M909,616.500l2,2.500 2-2.500Z" fill="#ccc"/>
<rect x="908" y="457" width="6" height="156" rx="3" fill="#636363"/>
<rect x="871" y="629.500" width="34" height="1.200" fill="#555"/><circle cx="891" cy="630" r="3" fill="#a0a0a0"/>

<!-- Folders row 1 -->
<use href="#folder" x="144" y="459" width="30" height="25"/><use href="#folder" x="192" y="459" width="30" height="25"/><use href="#folder" x="240" y="459" width="30" height="25"/><use href="#folder" x="288" y="459" width="30" height="25"/><use href="#folder" x="336" y="459" width="30" height="25"/><use href="#folder" x="383" y="459" width="30" height="25"/><use href="#folder" x="431.500" y="459" width="30" height="25"/><use href="#folder" x="479" y="459" width="30" height="25"/><use href="#folder" x="527" y="459" width="30" height="25"/><use href="#folder" x="575" y="459" width="30" height="25"/><use href="#folder" x="623" y="459" width="30" height="25"/><use href="#folder" x="670" y="459" width="30" height="25"/><use href="#folder" x="718.500" y="459" width="30" height="25"/><use href="#folder" x="766.500" y="459" width="30" height="25"/><use href="#folder" x="814" y="459" width="30" height="25"/><use href="#folder" x="862" y="459" width="30" height="25"/>
<!-- Folders row 2 -->
<use href="#folder" x="144" y="517" width="30" height="25"/><use href="#folder" x="192" y="517" width="30" height="25"/><use href="#folder" x="240" y="517" width="30" height="25"/><use href="#folder" x="288" y="517" width="30" height="25"/><use href="#folder" x="336" y="517" width="30" height="25"/><use href="#folder" x="383" y="517" width="30" height="25"/><use href="#folder" x="431.500" y="517" width="30" height="25"/><use href="#folder" x="479" y="517" width="30" height="25"/><use href="#folder" x="527" y="517" width="30" height="25"/>
<!-- thumbs row 2 -->
<rect x="571" y="511" width="38" height="38" fill="#0c0c0c"/><path d="M577,517L603,525 602,537 578,533Z" fill="#3f3f3f"/><path d="M579,533v10M602,537v7" stroke="#555" stroke-width=".8"/>
<rect x="619" y="511" width="38" height="38" fill="#0d0d0d"/><circle cx="638" cy="530" r="17.500" fill="#7a6a5c"/>
<rect x="667" y="511" width="38" height="38" fill="#2f4141"/><path d="M667,517h38M667,523h38M667,529h38M667,535h38M667,541h38M674,511v38M686,511v38M698,511v38" stroke="#263636" stroke-width=".7"/>
<rect x="715" y="511" width="38" height="38" fill="#0c0c0c"/><path d="M717,523L748,525 753,527 750,538 745,542 718,535Z" fill="#464646"/>
<rect x="763" y="511" width="38" height="38" fill="#1d3c5a" filter="url(#gr)"/>
<rect x="811" y="511" width="38" height="38" fill="#0c0c0c"/><ellipse cx="825" cy="529" rx="4" ry="7" fill="#2a2a2a" stroke="#666" stroke-width=".8"/><path d="M828,524l6,5 9,4-9,1-6,2Z" fill="#666"/>
<path d="M877,520c5,6 8,10 8,14a8,8 0 0 1-16,0c0-4 3-8 8-14Z" fill="url(#drop)"/>
<use href="#play" x="605" y="525" width="10" height="10"/>
<use href="#play" x="845" y="525" width="10" height="10"/>
<!-- row 3 -->
<circle cx="155" cy="583" r="12.500" fill="#fbcf25"/>
<path d="M147,595h11l-1,5c-2,2-7,2-9,0Z" fill="#ccc"/>
<circle cx="168" cy="597" r="7" fill="#333"/><circle cx="168" cy="597" r="5.500" fill="none" stroke="#d8d8d8" stroke-width="2.700" stroke-dasharray="2.700 1.600"/><circle cx="168" cy="597" r="3.300" fill="none" stroke="#d8d8d8" stroke-width="1.400"/>
<path d="M191,586.500L209,575 218,573 221,586 218,600 209,598Z" fill="none" stroke="#e8e8e8" stroke-width="2.600" stroke-linejoin="round"/><path d="M206,586.500L216,575M206,586.500L216,598M191,586.500H206" stroke="#e8e8e8" stroke-width="2.400"/>
<use href="#terr" x="240" y="570" width="30" height="36"/>
<use href="#terr" x="288" y="570" width="30" height="36"/>
<use href="#terr" x="336" y="570" width="30" height="36"/>
<use href="#play" x="317" y="584" width="10" height="10"/>
<rect x="380" y="569" width="38" height="38" fill="#0d0d0d"/><circle cx="398" cy="588" r="18" fill="url(#sph)"/>
<use href="#rm" x="431" y="571" width="36" height="36"/>
<rect x="476" y="569" width="38" height="38" fill="#0b0b0b"/><path d="M488,597c2-10 6-18 12-22" fill="none" stroke="#222" stroke-width=".7"/>
<use href="#rm" x="526" y="571" width="36" height="36"/>
<use href="#rm" x="574" y="571" width="36" height="36"/>
<rect x="619" y="569" width="38" height="38" fill="#0c0c0c"/><ellipse cx="637" cy="588" rx="5" ry="13" fill="none" stroke="#5e5e5e" stroke-width="1.500" transform="rotate(10 637 588)"/>
<rect x="667" y="569" width="38" height="38" fill="#0c0c0c"/><path d="M684,578l-4,9-4,8h16l-4-8Z" fill="#18252f"/><ellipse cx="684" cy="596" rx="9" ry="2.500" fill="#1c2c3a"/>
<rect x="715" y="569" width="38" height="38" fill="#0a0a0a"/><path d="M727,585l4-1 5,4 8,2-8,2-7,-1Z" fill="#171e26"/>
<use href="#play" x="510" y="583" width="10" height="10"/>
<use href="#play" x="653" y="583" width="10" height="10"/>
<use href="#play" x="701" y="583" width="10" height="10"/>
<use href="#play" x="749" y="583" width="10" height="10"/>
<!-- status -->
<path d="M1139,640l7,7M1146,640l-7,7M1142.500,638v10" stroke="#bbb" stroke-width="1.500"/>
<rect x="1155" y="639" width="7" height="2.500" fill="#bbb"/><rect x="1155" y="642.500" width="7" height="2.500" fill="#aaa"/><rect x="1154" y="646" width="9" height="2" fill="#bbb"/>
<circle cx="1175" cy="643" r="3.500" fill="none" stroke="#aaa" stroke-width="1.200"/><path d="M1171,639l8,8" stroke="#bbb" stroke-width="1"/>
<circle cx="1191" cy="643.500" r="4" fill="none" stroke="#bbb" stroke-width=".8"/><path d="M1189,643.500l1.500,1.500 2.500-3" fill="none" stroke="#bbb" stroke-width=".8"/>
</svg>

<!-- title bar text -->
<span class="w" style="left:15px;top:2.500px;font-size:7.300px">Cremlin - Game 1 - Android - Unity 2020.3.27f1 Personal &lt;DX11&gt;</span>
<span class="w" style="left:5px;top:15.500px">File</span>
<span class="w" style="left:25px;top:15.500px">Edit</span>
<span class="w" style="left:46px;top:15.500px">Assets</span>
<span class="w" style="left:75px;top:15.500px">GameObject</span>
<span class="w" style="left:125px;top:15.500px">Component</span>
<span class="w" style="left:174px;top:15.500px">Tutorial</span>
<span class="w" style="left:208px;top:15.500px">Tools</span>
<span class="w" style="left:233px;top:15.500px">Window</span>
<span class="w" style="left:270px;top:15.500px">Help</span>

<!-- toolbar text -->
<span style="left:164px;top:31.500px;color:#b0b0b0">Center</span>
<span style="left:205px;top:31.500px;color:#b0b0b0">Local</span>
<span style="left:857.500px;top:31.500px;color:#d1a14e">Preview Packages in Use</span>
<span style="left:1020px;top:31.500px;color:#bcbcbc">Account</span>
<span style="left:1075px;top:31.500px;color:#bcbcbc">Layers</span>
<span style="left:1130px;top:31.500px;color:#bcbcbc">Layout</span>

<!-- tabs -->
<span style="left:14.500px;top:47px">Hierarchy</span>
<span style="left:233px;top:47px">Scene</span>
<span style="left:282px;top:47px">Asset Store</span>
<span style="left:348px;top:47px">Game</span>
<span style="left:932px;top:47px">Inspector</span>
<span style="left:991px;top:47px">Occlusion</span>

<span style="left:39px;top:59px;font-size:7px;color:#5c5c5c">All</span>
<span style="left:221px;top:59px">Shaded</span>
<span style="left:301px;top:59px;font-size:7px">2D</span>
<span style="left:392px;top:59px;color:#a6a6a6">0</span>
<span style="left:741px;top:59px">Gizmos</span>
<span style="left:798px;top:59px;font-size:7px;color:#5c5c5c">All</span>

<!-- hierarchy -->
<span style="left:41px;top:70.500px;color:#d0d0d0;font-weight:bold;font-size:7.700px">Game 1</span>
<span class="b" style="left:49px;top:80.500px">XR Rig</span>
<span class="b" style="left:49px;top:90.500px">памятник1</span>
<span class="h" style="left:49px;top:100.500px">EventSystem</span>
<span class="h" style="left:49px;top:110.500px">Environment</span>
<span class="h" style="left:49px;top:120.500px">Terrain</span>
<span class="h" style="left:49px;top:130.500px">XR Interaction Manager</span>
<span class="h" style="left:49px;top:140.500px">WindZone</span>
<span class="h" style="left:49px;top:150.500px">Light</span>
<span class="h" style="left:49px;top:160.500px">Tablets</span>
<span class="h" style="left:49px;top:170.500px">Cylinder</span>
<span class="h" style="left:49px;top:180.500px">New Game Object</span>
<span class="h" style="left:49px;top:190.500px">rODS</span>

<!-- scene overlay -->
<span style="left:877px;top:128px;color:#bfc09a;font-size:7.500px">Persp</span>
<span style="left:789.500px;top:369px;color:#b5b5b5">Occlusion Culling</span>
<span style="left:783.500px;top:380px;color:#ccc">Edit</span>
<span style="left:789.500px;top:390.500px;color:#b5b5b5">View Volumes</span>

<!-- inspector text -->
<span style="left:1005px;top:65px">Object</span>
<span style="left:1035px;top:65px">Bake</span>
<span style="left:1061px;top:65px">Visualization</span>
<span style="left:920.500px;top:84px">Scene Filter:</span>
<span style="left:933px;top:98px">All</span>
<span style="left:960.500px;top:98px">Renderers</span>
<span style="left:1015.500px;top:98px">Occlusion Areas</span>
<span style="left:921.500px;top:116.500px;font-size:6.800px;color:#8f8f8f">Select a Mesh Renderer or an Occlusion Area from the scene.</span>
<span class="c" style="left:1105px;top:603px">Clear</span>
<span class="c" style="left:1167.500px;top:603.500px">Bake</span>
<span style="left:922.500px;top:623px;font-size:6.800px;color:#a0a0a0">No occlusion data has been baked.</span>

<!-- project text -->
<span style="left:14.500px;top:410px">Project</span>
<span style="left:65.500px;top:410px">Console</span>
<span style="left:903px;top:421px;color:#a8a8a8">27</span>
<span style="left:22px;top:433px;color:#d0d0d0;font-weight:bold;font-size:7.700px">Assets</span>
<span style="left:30px;top:443px">!Anim</span>
<span style="left:30px;top:453px">!Assets Store</span>
<span style="left:30px;top:463px">!Prefabs</span>
<span style="left:30px;top:473px">!Scripts</span>
<span style="left:30px;top:483px">!Terrain</span>
<span style="left:30px;top:493px">ExampleAssets</span>
<span style="left:30px;top:503px">HungNguyen-Stylize-Fire</span>
<span style="left:30px;top:513px">Material</span>
<span style="left:30px;top:523px">Materials</span>
<span style="left:30px;top:533px">Mesh</span>
<span style="left:30px;top:543px">Presets</span>
<span style="left:30px;top:553px">Roads</span>
<span style="left:30px;top:563px">Samples</span>
<span style="left:30px;top:573px">Scene</span>
<span style="left:30px;top:583px">Scenes</span>
<span style="left:30px;top:593px">Scripts</span>
<span style="left:30px;top:603px">Settings</span>
<span style="left:30px;top:613px">Shader</span>
<span style="left:30px;top:623px">Shaders</span>
<span style="left:133px;top:434px;font-weight:bold;font-size:7.500px;color:#bdbdbd">Assets</span>

<!-- grid labels row 1 -->
<span class="l c" style="left:159px;top:492px">!Anim</span>
<span class="l c" style="left:207px;top:492px">!Assets Sto...</span>
<span class="l c" style="left:255px;top:492px">!Prefabs</span>
<span class="l c" style="left:303px;top:492px">!Scripts</span>
<span class="l c" style="left:351px;top:492px">!Terrain</span>
<span class="l c" style="left:398px;top:492px">ExampleAs...</span>
<span class="l c" style="left:446px;top:492px">HungNguy...</span>
<span class="l c" style="left:494px;top:492px">Material</span>
<span class="l c" style="left:542px;top:492px">Materials</span>
<span class="l c" style="left:590px;top:492px">Mesh</span>
<span class="l c" style="left:638px;top:492px">Presets</span>
<span class="l c" style="left:685px;top:492px">Roads</span>
<span class="l c" style="left:733px;top:492px">Samples</span>
<span class="l c" style="left:781px;top:492px">Scene</span>
<span class="l c" style="left:829px;top:492px">Scenes</span>
<span class="l c" style="left:877px;top:492px">Scripts</span>
<!-- row 2 -->
<span class="l c" style="left:159px;top:550px">Settings</span>
<span class="l c" style="left:207px;top:550px">Shader</span>
<span class="l c" style="left:255px;top:550px">Shaders</span>
<span class="l c" style="left:303px;top:550px">Texture2D</span>
<span class="l c" style="left:351px;top:550px">Tileable_P...</span>
<span class="l c" style="left:398px;top:550px">Tree_Textu...</span>
<span class="l c" style="left:446px;top:550px">TutorialInfo</span>
<span class="l c" style="left:494px;top:550px">XR</span>
<span class="l c" style="left:542px;top:550px">XRI</span>
<span class="l c" style="left:590px;top:550px">billboard</span>
<span class="l c" style="left:638px;top:550px">Brick 1</span>
<span class="l c" style="left:685px;top:550px">Brick 1</span>
<span class="l c" style="left:733px;top:550px">Controller</span>
<span class="l c" style="left:781px;top:550px">model</span>
<span class="l c" style="left:829px;top:550px">model</span>
<span class="l c" style="left:877px;top:550px">model</span>
<!-- row 3 -->
<span class="l c" style="left:159px;top:608px">New Lighti...</span>
<span class="l c" style="left:207px;top:608px">New Scene</span>
<span class="l c" style="left:255px;top:608px">New Terra...</span>
<span class="l c" style="left:303px;top:608px">New Terra...</span>
<span class="l c" style="left:351px;top:608px">New Terra...</span>
<span class="l c" style="left:398px;top:608px">Plitka</span>
<span class="l c" style="left:446px;top:608px">Readme</span>
<span class="l c" style="left:494px;top:608px">ROAD 1</span>
<span class="l c" style="left:542px;top:608px">UniversalR...</span>
<span class="l c" style="left:590px;top:608px">UniversalR...</span>
<span class="l c" style="left:638px;top:608px">Тропа</span>
<span class="l c" style="left:685px;top:608px">памятник</span>
<span class="l c" style="left:733px;top:608px">памятник1</span>
<span style="left:449px;top:587px;font-size:19px;line-height:20px;font-weight:bold;color:#ee6a3c;letter-spacing:1px">{}</span>
<span style="left:544px;top:587px;font-size:19px;line-height:20px;font-weight:bold;color:#ee6a3c;letter-spacing:1px">{}</span>
<span style="left:592px;top:587px;font-size:19px;line-height:20px;font-weight:bold;color:#ee6a3c;letter-spacing:1px">{}</span>
</body></html>
